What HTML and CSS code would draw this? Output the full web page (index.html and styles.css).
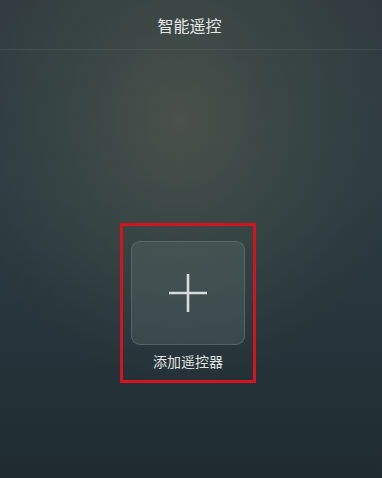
FILE: index.html
```html
<!DOCTYPE html>
<html lang="zh-CN">
<head>
    <meta charset="UTF-8">
    <meta name="viewport" content="width=device-width, initial-scale=1.0">
    <title>智能遥控</title>
    <link rel="stylesheet" href="styles.css">
</head>
<body>
    <div class="screen">
        <div class="topbar">
            <p class="title">智能遥控</p>
        </div>
        <div class="content">
            <div class="highlight">
                <div class="addTile">
                    <svg class="plus" width="40" height="40" viewBox="0 0 40 40">
                        <path d="M20 1 V39 M1 20 H39" stroke="#d9dcdb" stroke-width="2.6" fill="none"/>
                    </svg>
                </div>
                <p class="addLabel">添加遥控器</p>
            </div>
        </div>
    </div>
</body>
</html>
```

FILE: styles.css
```css
body{
    margin: 0;
    font-family: "Noto Sans CJK SC", "Noto Sans", sans-serif;
    background: #24303a;
}
.screen{
    width: 382px;
    height: 478px;
    overflow: hidden;
    background:
        radial-gradient(ellipse 230px 260px at 180px 120px, rgba(76, 82, 76, 0.95), rgba(62, 76, 70, 0.6) 50%, rgba(40, 52, 60, 0) 100%),
        linear-gradient(180deg, #30393f 0%, #2c3a42 40%, #26343b 70%, #1f2b30 100%);
}
.topbar{
    height: 49px;
    border-bottom: 1px solid rgba(120, 130, 130, 0.2);
    display: flex;
    align-items: center;
    justify-content: center;
}
.title{
    margin: 0;
    padding-right: 3px;
    color: #e6e8e8;
    font-size: 16px;
}
.content{
    display: flex;
    justify-content: center;
    padding-top: 173px;
}
.highlight{
    width: 130px;
    height: 139px;
    margin-right: 6px;
    border: 3px solid #d3141e;
    display: flex;
    flex-direction: column;
    align-items: center;
    padding-top: 15px;
}
.addTile{
    width: 112px;
    height: 102px;
    border: 1px solid rgba(150, 160, 160, 0.3);
    border-radius: 9px;
    background: rgba(120, 135, 130, 0.22);
    display: flex;
    align-items: center;
    justify-content: center;
}
.addLabel{
    margin: 7px 0 0;
    color: #e2e4e4;
    font-size: 14px;
    line-height: 18px;
}
```
